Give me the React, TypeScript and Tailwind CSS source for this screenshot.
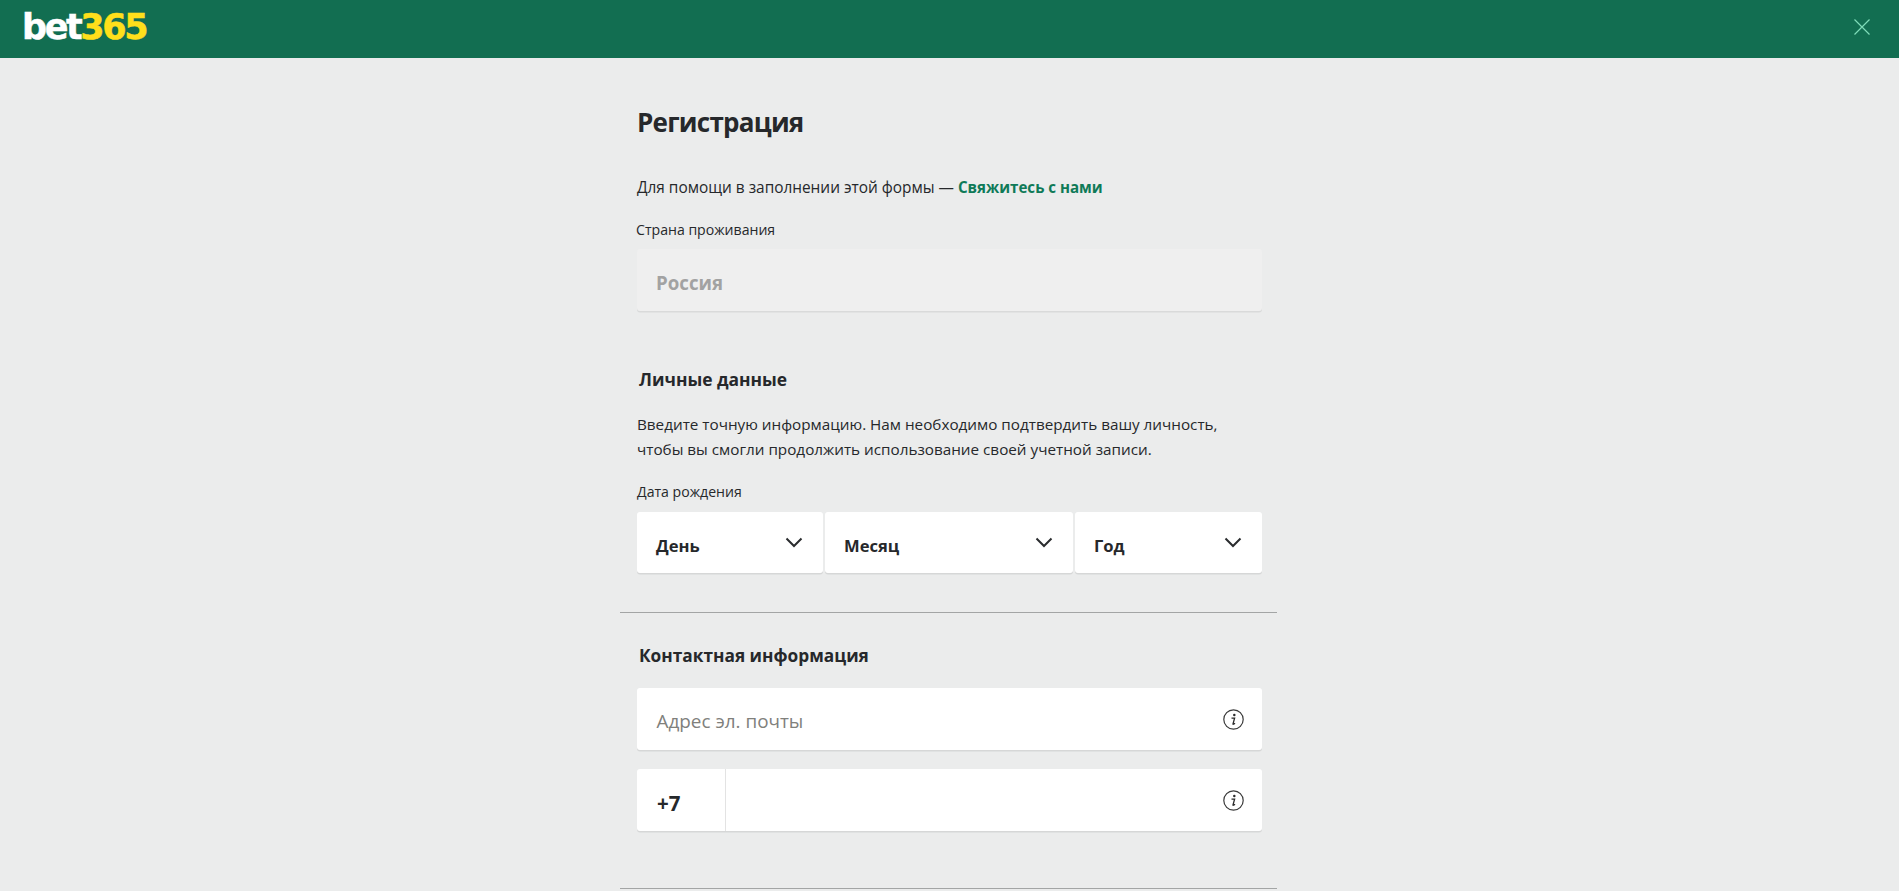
const font = "font-['Open_Sans',sans-serif]"

function Chevron() {
  return (
    <svg width="18" height="11" viewBox="0 0 18 11" fill="none" className="shrink-0">
      <path d="M1.5 1.5 9 9l7.5-7.5" stroke="#2a2c2e" strokeWidth="2" />
    </svg>
  )
}

function InfoIcon() {
  return (
    <svg width="21" height="21" viewBox="0 0 21 21" fill="none" className="shrink-0">
      <circle cx="10.5" cy="10.5" r="9.7" stroke="#3a3a3a" strokeWidth="1.2" />
      <circle cx="11.3" cy="5.9" r="1.25" fill="#2a2a2a" />
      <path d="M8.5 9.1h3.1l-1.6 5.8c-.1.5.5.6 2-.7" stroke="#2a2a2a" strokeWidth="1.3" />
    </svg>
  )
}

function Select({ label, className }: { label: string; className: string }) {
  return (
    <div className={`flex h-[61px] items-center justify-between rounded-[3px] bg-white pl-[19px] pr-5 shadow-[0_1.5px_0_#d6d7d7] ${className}`}>
      <span className="mt-[7px] text-[16.6px] leading-6 font-bold">{label}</span>
      <Chevron />
    </div>
  )
}

export default function App() {
  return (
    <div className={`h-screen overflow-hidden bg-[#ebecec] text-[#26282b] ${font}`}>
      <header className="flex h-[58px] items-center justify-between bg-[#126e51] pl-[22px] pr-[29px]">
        <div className="mt-[-3px] font-['DejaVu_Sans',sans-serif] text-[35px] leading-none font-bold tracking-[-2.4px] [-webkit-text-stroke:0.5px]">
          <span className="text-white">bet</span>
          <span className="text-[#ffdf1b]">365</span>
        </div>
        <svg width="16" height="16" viewBox="0 0 16 16" fill="none" className="mt-[-4px]">
          <path d="M.5.5l15 15M15.5.5l-15 15" stroke="#7fdcb8" strokeWidth="1.2" />
        </svg>
      </header>

      <main className="mx-auto w-[625px]">
        <h1 className="mt-[46px] text-[26px] leading-9 font-bold tracking-[-0.75px]">Регистрация</h1>
        <p className="mt-[35px] text-[15.4px] leading-6">
          Для помощи в заполнении этой формы — <a className="text-[15.1px] font-bold text-[#0f7a58]">Свяжитесь с нами</a>
        </p>
        <div className="mt-[20px] ml-[-1px] text-[14.1px] leading-5">Страна проживания</div>
        <div className="mt-[9px] flex h-[62px] items-center rounded-[3px] bg-[#efefef] pl-[19px] text-[18.7px] font-bold text-[#a2a2a2] shadow-[0_1.5px_0_#d9dada]">
          <span className="mt-[6px]">Россия</span>
        </div>

        <h2 className="mt-[56px] ml-[2px] text-[17.4px] leading-6 font-bold">Личные данные</h2>
        <p className="mt-[21px] text-[15.25px] leading-[25px]">
          Введите точную информацию. Нам необходимо подтвердить вашу личность,
          <br />
          чтобы вы смогли продолжить использование своей учетной записи.
        </p>
        <div className="mt-[20px] text-[14.1px] leading-5">Дата рождения</div>
        <div className="mt-[10px] flex gap-[2px]">
          <Select label="День" className="w-[186px]" />
          <Select label="Месяц" className="w-[248px]" />
          <Select label="Год" className="w-[187px]" />
        </div>

        <div className="mt-[39px] ml-[-17px] h-px w-[657px] bg-[#a3a5a5]" />

        <h2 className="mt-[31px] ml-[2px] text-[17.3px] leading-6 font-bold">Контактная информация</h2>
        <div className="mt-[20px] flex h-[62px] items-center justify-between rounded-[3px] bg-white pl-[19.5px] pr-[18px] shadow-[0_1.5px_0_#d6d7d7]">
          <span className="mt-[4px] text-[18.9px] text-[#80807c]">Адрес эл. почты</span>
          <InfoIcon />
        </div>
        <div className="mt-[19px] flex h-[62px] items-center rounded-[3px] bg-white shadow-[0_1.5px_0_#d6d7d7]">
          <div className="flex h-full w-[89px] items-center border-r border-[#e3e3e3] pl-5 text-[20.5px] font-bold">
            <span className="mt-[6px]">+7</span>
          </div>
          <div className="flex flex-1 items-center justify-end pr-[18px]">
            <InfoIcon />
          </div>
        </div>
        <div className="mt-[57px] ml-[-17px] h-px w-[657px] bg-[#a3a5a5]" />
      </main>
    </div>
  )
}
